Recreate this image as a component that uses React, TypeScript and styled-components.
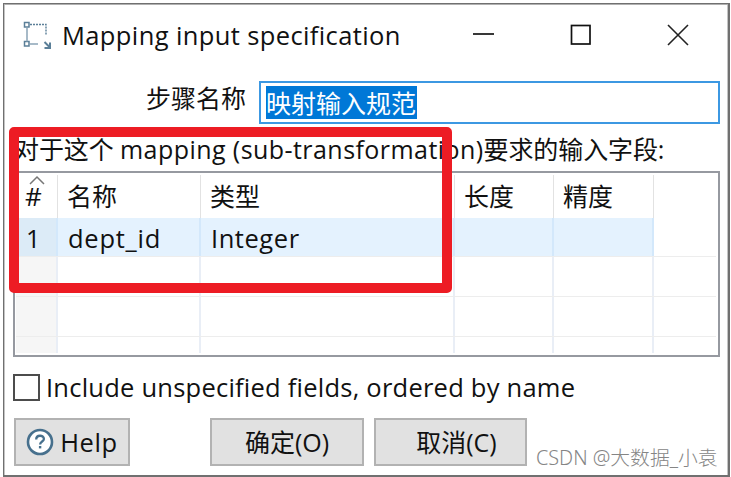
import React from 'react';
import styled, { createGlobalStyle } from 'styled-components';

const GlobalStyle = createGlobalStyle`
  * { box-sizing: border-box; }
  body {
    margin: 0;
    background: #fff;
    color: #111;
    font-family: "Open Sans", "Noto Sans CJK SC", sans-serif;
    font-size: 25px;
  }
`;

const Dialog = styled.main`
  position: relative;
  display: flex;
  flex-direction: column;
  width: 727px;
  height: 474px;
  margin: 3px 0 0 3px;
  border: 1px solid #707070;
  border-right-width: 2px;
  border-bottom-width: 2px;
  box-shadow: inset 0 1px #b0b0b0, inset 1px 0 #c4c4c4, inset -1px 0 #c4c4c4;
  overflow: hidden;
`;

const Text = styled.span<{ $spacing?: number; $size?: number }>`
  flex: none;
  white-space: pre;
  line-height: 34px;
  font-size: ${(p) => p.$size ?? 25}px;
  letter-spacing: ${(p) => p.$spacing ?? 0}px;
`;

const TitleBar = styled.header`
  display: flex;
  align-items: center;
  flex: none;
  height: 62px;
  padding-left: 18px;
`;

const Title = styled.h1`
  flex: 1;
  display: flex;
  margin: 0 0 0 10px;
  font-weight: 400;
`;

const WindowControls = styled.div`
  display: flex;
  gap: 75px;
  margin-right: 39px;
  svg { display: block; }
`;

const NameRow = styled.label`
  display: flex;
  flex: none;
  height: 43px;
  margin-top: 15px;
  padding: 0 8px 0 142px;
`;

const NameInput = styled.div`
  display: flex;
  align-items: center;
  width: 461px;
  height: 43px;
  margin-left: auto;
  padding-left: 5px;
  border: 2px solid #3c98e2;
`;

const Selection = styled.span`
  height: 33px;
  line-height: 34px;
  width: 151px;
  background: #0078d7;
  color: #fff;
  white-space: nowrap;
`;

const Caption = styled.div`
  display: flex;
  flex: none;
  height: 34px;
  margin: 8px 0 0 10px;
`;

const Grid = styled.div`
  display: flex;
  flex-direction: column;
  flex: none;
  width: 707px;
  height: 186px;
  margin: 5px 0 0 9px;
  padding: 0 2px 2px 1px;
  border: 2px solid #9699a0;
  overflow: hidden;
`;

type RowKind = 'header' | 'selected' | 'empty';

const rowHeights: Record<RowKind, number> = { header: 45, selected: 38, empty: 40 };
const dividers: Record<RowKind, string> = {
  header: '1px solid #e2e2e2',
  selected: '2px solid #d3e8fb',
  empty: '2px solid #e9eef6',
};
const textInsets: Record<RowKind, string> = {
  header: '0 0 2px 9px',
  selected: '2px 0 0 10px',
  empty: '0',
};

const GridRows = styled.div`
  display: flex;
  flex-direction: column;
  flex: 1;
  min-height: 0;
  overflow: hidden;
`;

const GridRow = styled.div<{ $kind: RowKind }>`
  display: grid;
  grid-template-columns: 42px 143px 254px 99px 100px 1fr;
  flex: none;
  height: ${(p) => rowHeights[p.$kind]}px;
  border-top: ${(p) => (p.$kind === 'empty' ? '1px solid #ededed' : '0')};
`;

const Cell = styled.div<{ $kind: RowKind; $index?: boolean }>`
  position: relative;
  display: flex;
  align-items: center;
  padding: ${(p) => textInsets[p.$kind]};
  margin-top: ${(p) => (p.$kind === 'header' ? 2 : 0)}px;
  border-right: ${(p) => dividers[p.$kind]};
  background: ${(p) =>
    p.$kind === 'selected' ? (p.$index ? '#dcebf7' : '#e4f2fe') : p.$index && p.$kind === 'empty' ? '#f6f6f6' : '#fff'};
  &:last-child { background: #fff; border-right: 0; }
`;

const SortArrow = styled.svg`
  position: absolute;
  left: 13px;
  top: 0;
`;

const CheckRow = styled.label`
  display: flex;
  align-items: center;
  flex: none;
  height: 34px;
  margin: 13px 0 0 9px;
`;

const CheckBox = styled.span`
  width: 27px;
  height: 27px;
  margin-right: 6px;
  border: 2px solid #4c4c4c;
`;

const Actions = styled.footer`
  display: flex;
  flex: none;
  margin: 14px 0 0 10px;
`;

const Button = styled.button<{ $width: number; $gap?: number; $indent?: number }>`
  display: flex;
  align-items: center;
  justify-content: center;
  width: ${(p) => p.$width}px;
  height: 48px;
  margin: 0 0 0 ${(p) => p.$gap ?? 0}px;
  padding: 0 0 0 ${(p) => p.$indent ?? 0}px;
  border: 2px solid #b2b2b2;
  background: #e1e1e1;
  color: #111;
  font-family: inherit;
  svg { margin-right: 6px; flex: none; }
`;

const RedFrame = styled.div`
  position: absolute;
  left: 5px;
  top: 123px;
  width: 443px;
  height: 166px;
  border: 10px solid #ed1c24;
  border-radius: 5px;
`;

const Watermark = styled.div`
  position: absolute;
  left: 532px;
  top: 437px;
  display: flex;
  color: #858585;
  font-family: "Noto Sans", "Noto Sans CJK SC", sans-serif;
  font-weight: 300;
`;

const MappingIcon = () => (
  <svg width="30" height="30" viewBox="0 0 30 30" fill="none" stroke="#5b7f98">
    <rect x="2.5" y="2.5" width="4.5" height="4.5" strokeWidth="1.5" />
    <rect x="2.5" y="21.5" width="4.5" height="4.5" strokeWidth="1.5" />
    <path d="M5 7.5v14M8 24h8" strokeWidth="1.5" stroke="#8ba4b7" />
    <path d="M8 4.5h16v11" strokeWidth="1.4" strokeDasharray="2 1" />
    <path d="M22.5 22l5 5M28 22.5v5.5h-5.5" strokeWidth="2" />
  </svg>
);

const HelpIcon = () => (
  <svg width="28" height="28" viewBox="0 0 28 28" fill="none" stroke="#47708d">
    <circle cx="14" cy="14" r="12" fill="#fff" strokeWidth="2.6" />
    <path d="M10.2 11.5c0-5 7.7-4.8 7.7-.6 0 2.7-3.8 2.6-3.8 5.7" strokeWidth="2.3" />
    <path d="M14.1 18v2.4" strokeWidth="2.4" />
  </svg>
);

const App = () => (
  <>
    <GlobalStyle />
    <Dialog>
      <TitleBar>
        <MappingIcon />
        <Title><Text $size={25.5} $spacing={0.38}>Mapping input specification</Text></Title>
        <WindowControls>
          <svg width="23" height="22"><path d="M1 10h21" stroke="#222" strokeWidth="1.8" /></svg>
          <svg width="22" height="22"><rect x="1.5" y="1.5" width="18.5" height="18.5" fill="none" stroke="#111" strokeWidth="1.7" /></svg>
          <svg width="22" height="22"><path d="M1 1l20 20M21 1L1 21" stroke="#222" strokeWidth="1.6" /></svg>
        </WindowControls>
      </TitleBar>
      <NameRow>
        <Text>步骤名称</Text>
        <NameInput><Selection>映射输入规范</Selection></NameInput>
      </NameRow>
      <Caption>
        <Text $spacing={-0.1}>对于这个 </Text>
        <Text $spacing={0.44}>mapping (sub-transformation)</Text>
        <Text $spacing={-0.1}>要求的输入字段:</Text>
      </Caption>
      <Grid>
        <GridRows>
          <GridRow $kind="header">
            <Cell $kind="header" $index>
              <SortArrow width="16" height="10" fill="none" stroke="#777" strokeWidth="1.5"><path d="M1 9l7-7 7 7" /></SortArrow>
              <Text $size={26}>#</Text>
            </Cell>
            <Cell $kind="header"><Text>名称</Text></Cell>
            <Cell $kind="header"><Text>类型</Text></Cell>
            <Cell $kind="header"><Text>长度</Text></Cell>
            <Cell $kind="header"><Text>精度</Text></Cell>
            <Cell $kind="header" />
          </GridRow>
          <GridRow $kind="selected">
            <Cell $kind="selected" $index><Text>1</Text></Cell>
            <Cell $kind="selected"><Text $size={25.5} $spacing={0.75}>dept_id</Text></Cell>
            <Cell $kind="selected"><Text $size={25.5} $spacing={0.55}>Integer</Text></Cell>
            <Cell $kind="selected" />
            <Cell $kind="selected" />
            <Cell $kind="selected" />
          </GridRow>
          {[0, 1, 2].map((row) => (
            <GridRow $kind="empty" key={row}>
              {[0, 1, 2, 3, 4, 5].map((column) => (
                <Cell $kind="empty" $index={column === 0} key={column} />
              ))}
            </GridRow>
          ))}
        </GridRows>
      </Grid>
      <CheckRow>
        <CheckBox />
        <Text $size={25.5} $spacing={0.23}>Include unspecified fields, ordered by name</Text>
      </CheckRow>
      <Actions>
        <Button $width={116}><HelpIcon /><Text $size={25.5} $spacing={0.6}>Help</Text></Button>
        <Button $width={154} $gap={80}><Text>确定(O)</Text></Button>
        <Button $width={153} $gap={10} $indent={12}><Text>取消(C)</Text></Button>
      </Actions>
      <RedFrame />
      <Watermark><Text $size={19.8}>CSDN @大数据_小袁</Text></Watermark>
    </Dialog>
  </>
);

export default App;
